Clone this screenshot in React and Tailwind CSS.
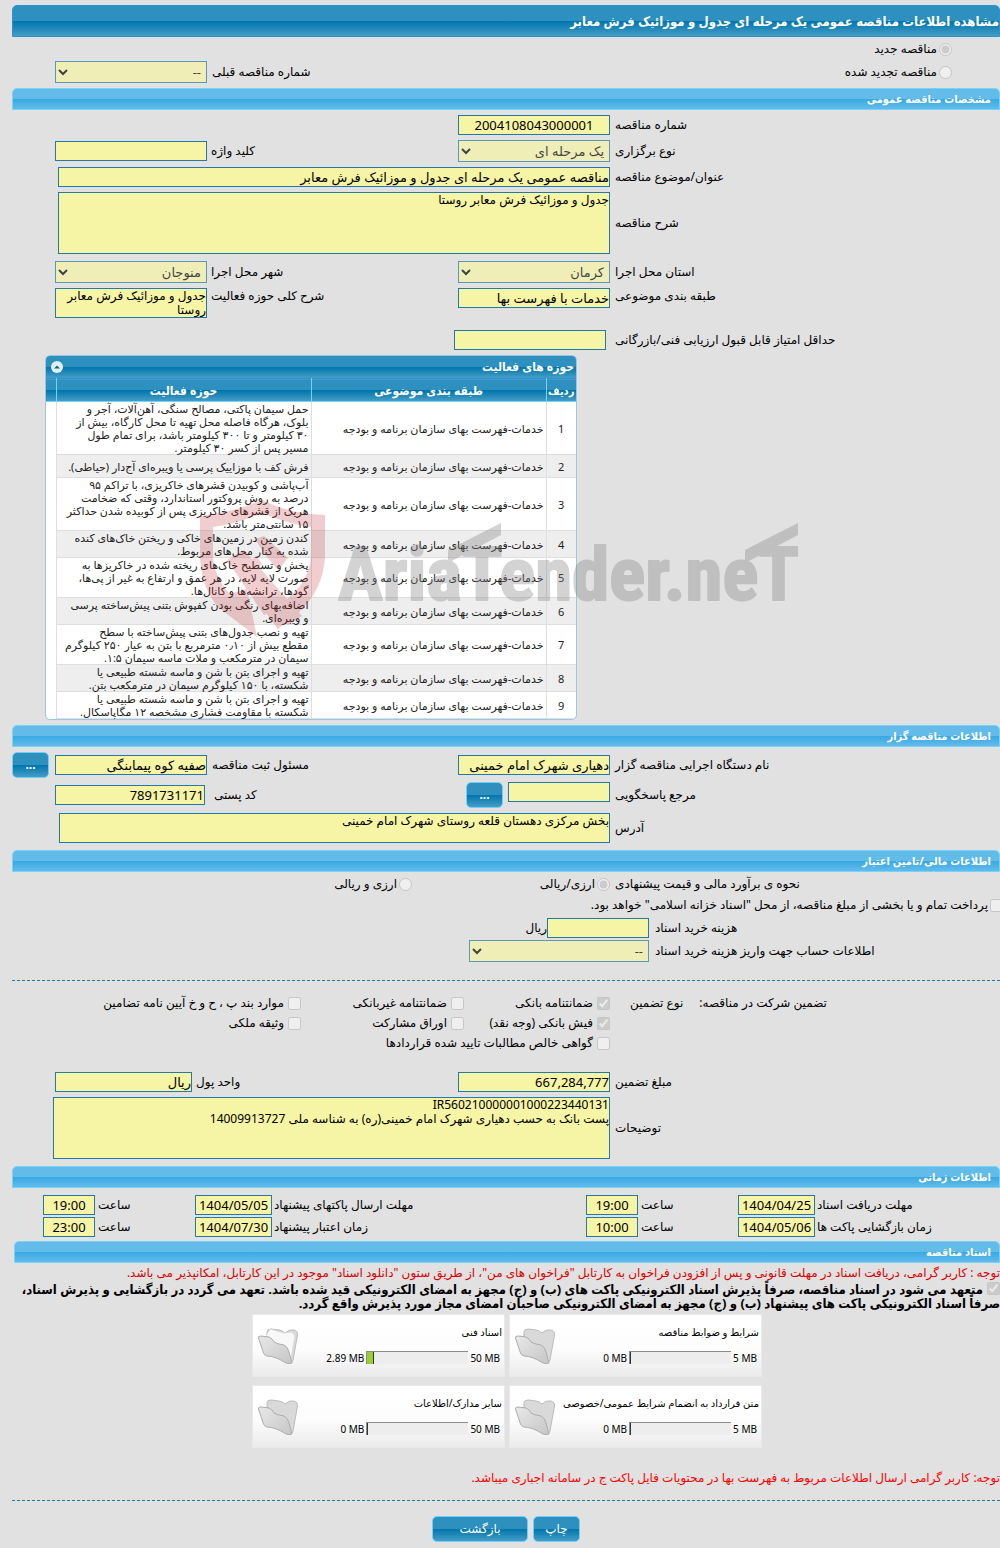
import React from "react";

const activities = [
  "حمل سیمان پاکتی، مصالح سنگی، آهن‌آلات، آجر و\nبلوک، هرگاه فاصله محل تهیه تا محل کارگاه، بیش از\n۳۰ کیلومتر و تا ۳۰۰ کیلومتر باشد، برای تمام طول\nمسیر پس از کسر ۳۰ کیلومتر.",
  "فرش کف با موزاییک پرسی یا ویبره‌ای آج‌دار (حیاطی).",
  "آب‌پاشی و کوبیدن قشرهای خاکریزی، با تراکم ۹۵\nدرصد به روش پروکتور استاندارد، وقتی که ضخامت\nهریک از قشرهای خاکریزی پس از کوبیده شدن حداکثر\n۱۵ سانتی‌متر باشد.",
  "کندن زمین در زمین‌های خاکی و ریختن خاک‌های کنده\nشده به کنار محل‌های مربوط.",
  "پخش و تسطیح خاک‌های ریخته شده در خاکریزها به\nصورت لایه لایه، در هر عمق و ارتفاع به غیر از پی‌ها،\nگودها، ترانشه‌ها و کانال‌ها.",
  "اضافه‌بهای رنگی بودن کفپوش بتنی پیش‌ساخته پرسی\nو ویبره‌ای.",
  "تهیه و نصب جدول‌های بتنی پیش‌ساخته با سطح\nمقطع بیش از ۰٫۱۰ مترمربع با بتن به عیار ۲۵۰ کیلوگرم\nسیمان در مترمکعب و ملات ماسه سیمان ۱:۵.",
  "تهیه و اجرای بتن با شن و ماسه شسته طبیعی یا\nشکسته، با ۱۵۰ کیلوگرم سیمان در مترمکعب بتن.",
  "تهیه و اجرای بتن با شن و ماسه شسته طبیعی یا\nشکسته با مقاومت فشاری مشخصه ۱۲ مگاپاسکال.",
];

const files = [
  { title: "شرایط و ضوابط مناقصه", max: 5, used: 0 },
  { title: "اسناد فنی", max: 50, used: 2.89, open: true },
  { title: "متن قرارداد به انضمام شرایط عمومی/خصوصی", max: 5, used: 0 },
  { title: "سایر مدارک/اطلاعات", max: 50, used: 0 },
];

const row = "grid grid-cols-[1fr_152px_251px_152px] items-center pl-[43px]";
const box = "border border-[#2579a9] bg-[#f6f4a5] text-black outline-none";
const boldFont = "font-['Noto_Sans','DejaVu_Sans_Condensed','DejaVu_Sans',sans-serif] font-bold";
const darkBar =
  "bg-[linear-gradient(#2d90bf_0%,#2d90bf_50%,#0075ad_50%,#459dc5_100%)]";

const SectionTitle = ({ children }) => (
  <h2
    className={`h-[22px] rounded-t-[5px] border border-[#74d3f8] bg-[linear-gradient(#63bbe9_0%,#63bbe9_50%,#38a8e3_50%,#63bbea_100%)] pr-2 text-[11px] leading-5 text-white ${boldFont}`}
  >
    {children}
  </h2>
);

const Label = ({ htmlFor, className = "pl-[5px]", children }) => (
  <label htmlFor={htmlFor} className={`${className} text-left whitespace-nowrap`}>
    {children}
  </label>
);

const TextBox = ({ id, value = "", className = "w-full" }) => (
  <input id={id} type="text" readOnly value={value} className={`${box} h-5 text-[13px] ${className}`} />
);

const TextArea = ({ id, value, className }) => (
  <textarea
    id={id}
    readOnly
    value={value}
    className={`${box} block resize-none overflow-hidden leading-[14px] ${className}`}
  />
);

const SelectBox = ({ id, value, className = "w-full" }) => (
  <select id={id} disabled className={`${box} h-[22px] pr-px text-[13px] disabled:opacity-70 ${className}`}>
    <option>{value}</option>
  </select>
);

const Choice = ({ type = "checkbox", name, checked = false, children, className = "gap-[2px]" }) => (
  <label className={`flex items-center whitespace-nowrap ${className}`}>
    <input type={type} name={name} defaultChecked={checked} disabled className="m-0 size-[13px] shrink-0" />
    {children}
  </label>
);

const BlueButton = ({ children, className }) => (
  <button
    type="button"
    className={`rounded-[5px] border border-[#6fd0f7] text-white ${darkBar} ${className}`}
  >
    {children}
  </button>
);

const Folder = ({ open }) => (
  <svg viewBox="0 0 42 38" className="h-[38px] w-[42px]" aria-hidden="true">
    <defs>
      <linearGradient id="folderFront" x1="0" y1="0" x2="1" y2="1">
        <stop offset="0" stopColor="#e8e8e8" />
        <stop offset="1" stopColor="#c6c6c6" />
      </linearGradient>
    </defs>
    <path
      d="M10 9V5Q10 2 14 2L22 3Q25 3.500 28 6Q32 2 37 3Q41 4 40.500 8L36 33Q35.500 36 32 36L14 28Z"
      fill="#d9d9d9"
      stroke="#bcbcbc"
    />
    {open && <path d="M9 9L13 2L27 6L35 5L38 9L34 32L14 27Z" fill="#f8f8f8" stroke="#d9d9d9" />}
    <path
      d="M1.500 11Q1 9 4 9L12 10Q15 11 17 15Q20 17 27 18Q31 20 32 25L35 36Q32 37 29 36Q18 29 10 29Q7 28 6.500 26Z"
      fill="url(#folderFront)"
      stroke="#adadad"
    />
  </svg>
);

const FileCard = ({ title, max, used, open }) => (
  <div className="flex h-[63px] justify-between border border-[#e9e9e9] bg-[linear-gradient(#ffffff_0%,#fdfdfd_55%,#ebebeb_100%)] pl-1">
    <div className="pt-[10px] pr-[2px] text-[10px]">
      <h3 className="leading-[14px] whitespace-nowrap">{title}</h3>
      <div className="mt-3 flex items-center gap-[2px] pr-[2px] leading-3">
        <span dir="ltr">{max} MB</span>
        <div dir="ltr" className="h-[13px] w-[102px] border-t border-l border-[#8c8c8c] bg-[#ededed]">
          <div
            className="h-full min-w-px border-r border-[#333] bg-[#9acd32]"
            style={{ width: `${(used / max) * 120}%` }}
          />
        </div>
        <span dir="ltr">{used} MB</span>
      </div>
    </div>
    <div className="pt-3">
      <Folder open={open} />
    </div>
  </div>
);

const Watermark = () => (
  <svg
    viewBox="0 0 602 140"
    direction="ltr"
    className="pointer-events-none absolute top-[143px] left-[188px] h-[140px] w-[602px]"
    aria-hidden="true"
  >
    <g fill="#c0272d" opacity="0.22">
      <path
        fillRule="evenodd"
        d="M0 18Q34 14 62 2Q90 16 125 17V58Q124 92 96 117L78 131L66 115Q112 90 111 55V29Q88 26 62 15Q38 26 13 29V56Q13 78 30 96L47 91L57 139L18 109Q0 88 0 55Z"
      />
      <path d="M27 62L44 52L102 118L88 127L72 113L64 117ZM55 41L64 38L88 60L78 72L66 58ZM46 66L56 58L62 66L52 74Z" />
    </g>
    <g fill="#808080" stroke="#808080" strokeWidth="2" strokeLinejoin="round" opacity="0.34">
      <path d="M248 52L301 25V37L248 65ZM545 52L598 25V37L545 65Z" stroke="none" />
      <text
        x="138"
        y="102"
        fontFamily="'Liberation Sans Narrow', 'Roboto Condensed', 'Liberation Sans', sans-serif"
        fontSize="75"
        fontWeight="700"
      >
        AriaTender.neT
      </text>
    </g>
  </svg>
);

const ActivityTable = () => (
  <div className="w-[532px] overflow-hidden rounded-[5px] border border-[#9cc5de] bg-white">
    <div className={`flex h-[22px] items-center justify-between pr-[2px] pl-[5px] text-white ${boldFont} ${darkBar}`}>
      <span>حوزه های فعالیت</span>
      <button type="button" aria-label="بستن" className="flex size-3 items-center justify-center rounded-full bg-[#dff1fb]">
        <svg viewBox="0 0 8 8" className="size-2">
          <path d="M1 5.500L4 2.500L7 5.500Z" fill="#1b5f88" />
        </svg>
      </button>
    </div>
    <table className="w-full table-fixed border-collapse text-[11px] leading-[13px] text-[#222]">
      <colgroup>
        <col className="w-[30px]" />
        <col className="w-[235px]" />
        <col className="w-[255px]" />
        <col />
      </colgroup>
      <thead>
        <tr
          className={`h-[23px] border-t border-b border-t-[#2b92d6] border-b-[#74d3f8] text-[12px] text-white ${boldFont} ${darkBar}`}
        >
          <th className="border-l border-[#74d3f8] text-[11px]">ردیف</th>
          <th className="border-l border-[#74d3f8]">طبقه بندی موضوعی</th>
          <th className="border-l border-[#74d3f8]">حوزه فعالیت</th>
          <th />
        </tr>
      </thead>
      <tbody>
        {activities.map((text, i) => (
          <tr key={i} className="group h-[23px]">
            <td className="border-b border-l border-[#dedede] text-center group-even:bg-[#eeeeee]">{i + 1}</td>
            <td className="border-b border-l border-[#dedede] pr-[2px] whitespace-nowrap group-even:bg-[#eeeeee]">
              خدمات-فهرست بهای سازمان برنامه و بودجه
            </td>
            <td className="border-b border-l border-[#dedede] pr-[2px] whitespace-pre group-even:bg-[#eeeeee]">
              {text}
            </td>
            <td />
          </tr>
        ))}
      </tbody>
    </table>
  </div>
);

const DateRow = ({ items }) => (
  <div className="mt-[2px] grid grid-cols-[185fr_77px_100px_52px_314fr_77px_100px_52px] items-center pl-[31px]">
    {items.map(({ id, label, date, hour }) => (
      <React.Fragment key={id}>
        <Label htmlFor={id} className="pl-[2px]">{label}</Label>
        <TextBox id={id} value={date} className="w-full text-center" />
        <Label htmlFor={`${id}Hour`} className="pl-[3px]">ساعت</Label>
        <TextBox id={`${id}Hour`} value={hour} className="w-full text-center" />
      </React.Fragment>
    ))}
  </div>
);

export default function App() {
  return (
    <main
      dir="rtl"
      className="min-h-screen overflow-x-hidden bg-[#e1e1e1] pt-[5px] pb-[5px] pl-3 font-['Noto_Sans','DejaVu_Sans',sans-serif] text-[12px] leading-4 text-black"
    >
      <h1 className={`h-8 rounded-t-[5px] border border-[#2b92d6] text-[13px] leading-[30px] text-white ${boldFont} ${darkBar}`}>
        مشاهده اطلاعات مناقصه عمومی یک مرحله ای جدول و موزائیک فرش معابر
      </h1>

      <div className="flex h-6 items-center pr-12">
        <Choice type="radio" name="kind" checked>مناقصه جدید</Choice>
      </div>
      <div className={`${row} mb-[5px]`}>
        <Choice type="radio" name="kind" className="col-span-2 gap-[2px] pr-12">مناقصه تجدید شده</Choice>
        <Label htmlFor="prev">شماره مناقصه قبلی</Label>
        <SelectBox id="prev" value="--" />
      </div>

      <SectionTitle>مشخصات مناقصه عمومی</SectionTitle>
      <div className={`${row} mt-[5px]`}>
        <Label htmlFor="number">شماره مناقصه</Label>
        <TextBox id="number" value="2004108043000001" className="w-full text-center" />
      </div>
      <div className={`${row} mt-[5px]`}>
        <Label htmlFor="holding">نوع برگزاری</Label>
        <SelectBox id="holding" value="یک مرحله ای" />
        <Label htmlFor="keyword" className="pl-1">کلید واژه</Label>
        <TextBox id="keyword" />
      </div>
      <div className={`${row} mt-[5px]`}>
        <Label htmlFor="subject">عنوان/موضوع مناقصه</Label>
        <div className="col-span-3 flex pl-[3px]">
          <TextBox id="subject" value="مناقصه عمومی یک مرحله ای جدول و موزائیک فرش معابر" />
        </div>
      </div>
      <div className={`${row} mt-[5px]`}>
        <Label htmlFor="desc">شرح مناقصه</Label>
        <div className="col-span-3 pl-[3px]">
          <TextArea id="desc" value="جدول و موزائیک فرش معابر روستا" className="h-[62px] w-full" />
        </div>
      </div>
      <div className={`${row} mt-[7px]`}>
        <Label htmlFor="province">استان محل اجرا</Label>
        <SelectBox id="province" value="کرمان" />
        <Label htmlFor="city" className="pl-1">شهر محل اجرا</Label>
        <SelectBox id="city" value="منوجان" />
      </div>
      <div className="mt-[5px] grid grid-cols-[1fr_152px_251px_152px] items-start pl-[43px]">
        <Label htmlFor="category">طبقه بندی موضوعی</Label>
        <TextBox id="category" value="خدمات با فهرست بها" />
        <Label htmlFor="scope" className="pl-1">شرح کلی حوزه فعالیت</Label>
        <TextArea id="scope" value="جدول و موزائیک فرش معابر روستا" className="h-[30px] w-full" />
      </div>
      <div className={`${row} mt-3`}>
        <Label htmlFor="minScore">حداقل امتیاز قابل قبول ارزیابی فنی/بازرگانی</Label>
        <TextBox id="minScore" className="mr-1 w-[152px]" />
      </div>

      <div className="relative mt-[5px] mb-[5px] flex justify-end pl-[33px]">
        <ActivityTable />
        <Watermark />
      </div>

      <SectionTitle>اطلاعات مناقصه گزار</SectionTitle>
      <div className="mt-[5px] grid grid-cols-[1fr_152px_251px_152px_43px] items-center">
        <Label htmlFor="org">نام دستگاه اجرایی مناقصه گزار</Label>
        <TextBox id="org" value="دهیاری شهرک امام خمینی" />
        <Label htmlFor="registrar">مسئول ثبت مناقصه</Label>
        <TextBox id="registrar" value="صفیه کوه پیمابنگی" />
        <BlueButton className="mr-[6px] h-[26px] w-[37px] font-bold">...</BlueButton>
      </div>
      <div className="mt-1 grid grid-cols-[1fr_152px_251px_152px] items-center pl-[43px]">
        <Label htmlFor="responder">مرجع پاسخگویی</Label>
        <div className="flex items-start gap-[5px]">
          <TextBox id="responder" className="w-[102px] shrink-0" />
          <BlueButton className="h-[26px] w-[37px] shrink-0 font-bold">...</BlueButton>
        </div>
        <Label htmlFor="postal" className="pl-[7px]">کد پستی</Label>
        <TextBox id="postal" value="7891731171" className="mr-[2px] w-[150px]" />
      </div>
      <div className={`${row} mt-[5px]`}>
        <Label htmlFor="address">آدرس</Label>
        <div className="col-span-3 pl-1">
          <TextArea
            id="address"
            value="بخش مرکزی دهستان قلعه روستای شهرک امام خمینی"
            className="h-[30px] w-full"
          />
        </div>
      </div>

      <div className="h-[7px]" />
      <SectionTitle>اطلاعات مالی/تامین اعتبار</SectionTitle>
      <div className="grid h-6 grid-cols-[1fr_198px_400px] items-center">
        <span className="pl-[5px] text-left">نحوه ی برآورد مالی و قیمت پیشنهادی</span>
        <Choice type="radio" name="currency" checked>ارزی/ریالی</Choice>
        <Choice type="radio" name="currency">ارزی و ریالی</Choice>
      </div>
      <div className="flex h-[18px] items-center">
        <Choice className="-mr-[3px] gap-[2px]">
          پرداخت تمام و یا بخشی از مبلغ مناقصه، از محل "اسناد خزانه اسلامی" خواهد بود.
        </Choice>
      </div>
      <div className="mt-1 grid grid-cols-[1fr_180px_457px] items-center">
        <Label htmlFor="docCost" className="pl-[6px]">هزینه خرید اسناد</Label>
        <div className="flex items-center">
          <TextBox id="docCost" className="w-[102px]" />
          <span>ریال</span>
        </div>
      </div>
      <div className="mt-[2px] grid grid-cols-[1fr_180px_457px] items-center">
        <Label htmlFor="account" className="pl-[6px]">اطلاعات حساب جهت واریز هزینه خرید اسناد</Label>
        <SelectBox id="account" value="--" />
      </div>

      <hr className="mt-[18px] mb-3 border-t border-dashed border-[#2579a9]" />

      <div className="grid auto-rows-[20px] grid-cols-[1fr_146px_163px_289px] items-center">
        <div className="flex justify-end gap-4 pl-5">
          <span>تضمین شرکت در مناقصه:</span>
          <span>نوع تضمین</span>
        </div>
        <Choice checked className="gap-1">ضمانتنامه بانکی</Choice>
        <Choice className="gap-1">ضمانتنامه غیربانکی</Choice>
        <Choice className="gap-1">موارد بند پ ، ح و خ آیین نامه تضامین</Choice>
        <Choice checked className="col-start-2 gap-1">فیش بانکی (وجه نقد)</Choice>
        <Choice className="gap-1">اوراق مشارکت</Choice>
        <Choice className="gap-1">وثیقه ملکی</Choice>
        <Choice className="col-span-2 col-start-2 gap-1">گواهی خالص مطالبات تایید شده قراردادها</Choice>
      </div>

      <div className="mt-[19px] grid grid-cols-[1fr_152px_266px_137px] items-center pl-[43px]">
        <Label htmlFor="amount">مبلغ تضمین</Label>
        <TextBox id="amount" value="667,284,777" />
        <Label htmlFor="unit" className="pl-1">واحد پول</Label>
        <TextBox id="unit" value="ریال" />
      </div>
      <div className="mt-[5px] grid grid-cols-[1fr_557px] items-center pl-[41px]">
        <Label htmlFor="notes">توضیحات</Label>
        <TextArea
          id="notes"
          value={"IR560210000001000223440131\nپست بانک به حسب دهیاری شهرک امام خمینی(ره) به شناسه ملی 14009913727"}
          className="h-[62px] w-full"
        />
      </div>

      <div className="h-[7px]" />
      <SectionTitle>اطلاعات زمانی</SectionTitle>
      <div className="pt-[5px] pb-1">
        <DateRow
          items={[
            { id: "receive", label: "مهلت دریافت اسناد", date: "1404/04/25", hour: "19:00" },
            { id: "send", label: "مهلت ارسال پاکتهای پیشنهاد", date: "1404/05/05", hour: "19:00" },
          ]}
        />
        <DateRow
          items={[
            { id: "opening", label: "زمان بازگشایی پاکت ها", date: "1404/05/06", hour: "10:00" },
            { id: "validity", label: "زمان اعتبار پیشنهاد", date: "1404/07/30", hour: "23:00" },
          ]}
        />
      </div>

      <div className="pl-[2px]">
        <SectionTitle>اسناد مناقصه</SectionTitle>
      </div>
      <p className="mt-[2px] whitespace-nowrap text-[#dd0000]">
        توجه : کاربر گرامی، دریافت اسناد در مهلت قانونی و پس از افزودن فراخوان به کارتابل "فراخوان های من"، از طریق ستون "دانلود اسناد" موجود در این کارتابل، امکانپذیر می باشد.
      </p>
      <label className={`mt-px block text-[13px] leading-[14px] whitespace-nowrap ${boldFont}`}>
        <input type="checkbox" defaultChecked disabled className="m-0 ml-1 size-[13px] align-[-1px]" />
        متعهد می شود در اسناد مناقصه، صرفاً پذیرش اسناد الکترونیکی پاکت های (ب) و (ج) مجهز به امضای الکترونیکی قید شده باشد. تعهد می گردد در بازگشایی و پذیرش اسناد،
        <br />
        صرفاً اسناد الکترونیکی پاکت های پیشنهاد (ب) و (ج) مجهز به امضای الکترونیکی صاحبان امضای مجاز مورد پذیرش واقع گردد.
      </label>

      <div className="mt-1 grid grid-cols-[253px_253px] justify-center gap-x-1 gap-y-2 pl-[2px]">
        {files.map((file) => (
          <FileCard key={file.title} {...file} />
        ))}
      </div>

      <p className="mt-[22px] text-[#ff0000]">
        توجه: کاربر گرامی ارسال اطلاعات مربوط به فهرست بها در محتویات فایل پاکت ج در سامانه اجباری میباشد.
      </p>
      <hr className="mt-[14px] border-t border-dashed border-[#2579a9]" />
      <div className="mt-[15px] flex justify-center gap-[5px]">
        <BlueButton className="h-[26px] w-[47px]">چاپ</BlueButton>
        <BlueButton className="h-[26px] w-24">بازگشت</BlueButton>
      </div>
    </main>
  );
}
